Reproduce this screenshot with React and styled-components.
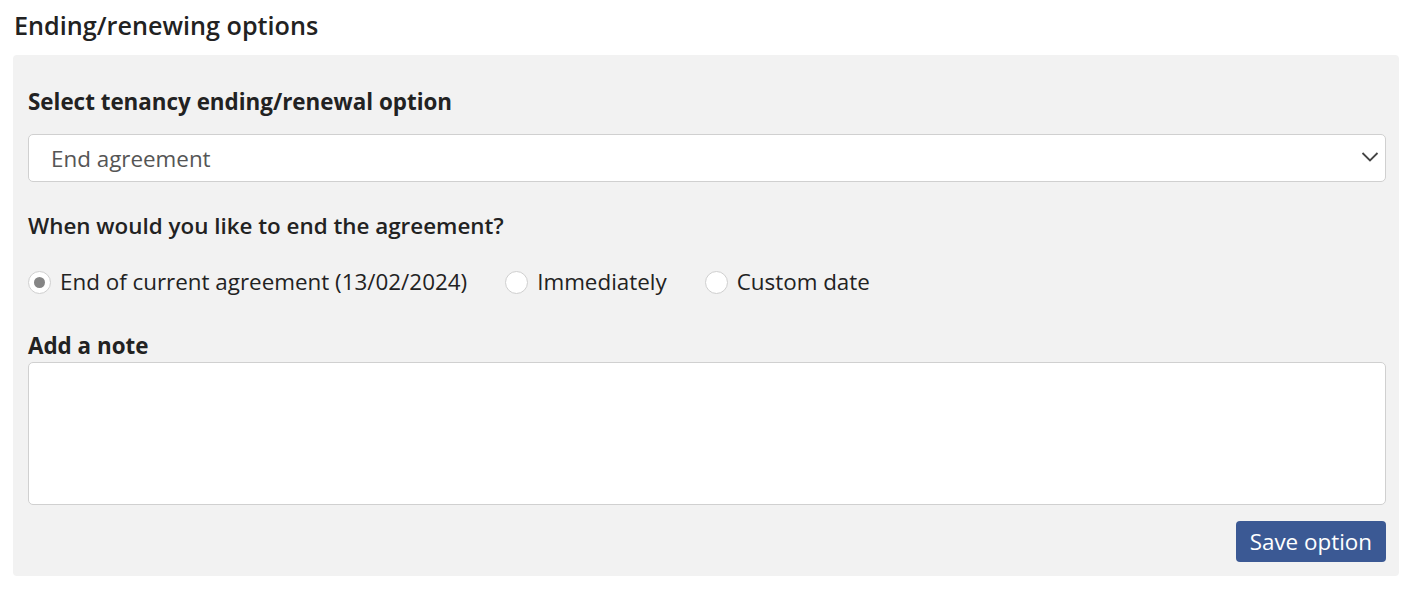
import React, { useState } from 'react';
import styled, { createGlobalStyle } from 'styled-components';

const GlobalStyle = createGlobalStyle`
  body {
    margin: 0;
    background: #ffffff;
    font-family: 'Open Sans', 'Liberation Sans', sans-serif;
    color: #222;
  }
`;

const Page = styled.div`
  padding: 7px 15px 0 13px;
`;

const Title = styled.h2`
  margin: 0 0 12px 1px;
  font-size: 25.2px;
  font-weight: 600;
  line-height: 36px;
  color: #222;
`;

const Panel = styled.div`
  background: #f2f2f2;
  border-radius: 4px;
  padding: 32px 13px 14px 15px;
  display: flex;
  flex-direction: column;
`;

const Label = styled.label`
  display: block;
  font-size: 22.4px;
  font-weight: ${(p) => p.$weight || 700};
  line-height: 30px;
  color: #222;
  margin-bottom: ${(p) => p.$gap || 0}px;
`;

const SelectWrap = styled.div`
  position: relative;
  margin-bottom: 29px;
`;

const Select = styled.select`
  width: 100%;
  height: 48px;
  appearance: none;
  background: #fff;
  border: 1px solid #d0d0d0;
  border-radius: 5px;
  padding: 0 22px;
  font-family: inherit;
  font-size: 22.4px;
  color: #555;
  outline: none;
`;

const Chevron = styled.svg`
  position: absolute;
  right: 6px;
  top: 16px;
  pointer-events: none;
`;

const RadioRow = styled.div`
  display: flex;
  align-items: center;
  gap: 38px;
  margin: 26px 0 34px;
`;

const RadioOption = styled.label`
  display: flex;
  align-items: center;
  gap: 9px;
  font-size: 22.4px;
  line-height: 30px;
  color: #222;
  cursor: pointer;
`;

const RadioCircle = styled.span`
  width: 23px;
  height: 23px;
  box-sizing: border-box;
  border-radius: 50%;
  border: 1px solid #cfcfcf;
  background: #fff;
  display: flex;
  align-items: center;
  justify-content: center;
  &::after {
    content: '';
    width: 11px;
    height: 11px;
    border-radius: 50%;
    background: ${(p) => (p.$checked ? '#858585' : 'transparent')};
  }
`;

const TextArea = styled.textarea`
  display: block;
  width: 100%;
  height: 143px;
  box-sizing: border-box;
  background: #fff;
  border: 1px solid #d0d0d0;
  border-radius: 5px;
  resize: none;
  font-family: inherit;
  font-size: 20px;
  outline: none;
  margin-bottom: 16px;
`;

const Actions = styled.div`
  display: flex;
  justify-content: flex-end;
`;

const SaveButton = styled.button`
  height: 41px;
  padding: 0 14px;
  border: none;
  border-radius: 4px;
  background: #3b5994;
  color: #fff;
  font-family: inherit;
  font-size: 22.4px;
  cursor: pointer;
`;

const options = [
  { id: 'end', label: 'End of current agreement (13/02/2024)' },
  { id: 'now', label: 'Immediately' },
  { id: 'custom', label: 'Custom date' },
];

const App = () => {
  const [choice, setChoice] = useState('end');
  return (
    <>
      <GlobalStyle />
      <Page>
        <Title>Ending/renewing options</Title>
        <Panel>
          <Label $gap={17}>Select tenancy ending/renewal option</Label>
          <SelectWrap>
            <Select defaultValue='end'>
              <option value='end'>End agreement</option>
              <option value='renew'>Renew agreement</option>
            </Select>
            <Chevron width='20' height='14' viewBox='0 0 20 14'>
              <path d='M2.5 3 L10 10.5 L17.5 3' fill='none' stroke='#444' strokeWidth='1.8' />
            </Chevron>
          </SelectWrap>
          <Label $weight={600}>When would you like to end the agreement?</Label>
          <RadioRow>
            {options.map((o) => (
              <RadioOption key={o.id} onClick={() => setChoice(o.id)}>
                <RadioCircle $checked={choice === o.id} />
                {o.label}
              </RadioOption>
            ))}
          </RadioRow>
          <Label $gap={1}>Add a note</Label>
          <TextArea />
          <Actions>
            <SaveButton>Save option</SaveButton>
          </Actions>
        </Panel>
      </Page>
    </>
  );
};

export default App;
